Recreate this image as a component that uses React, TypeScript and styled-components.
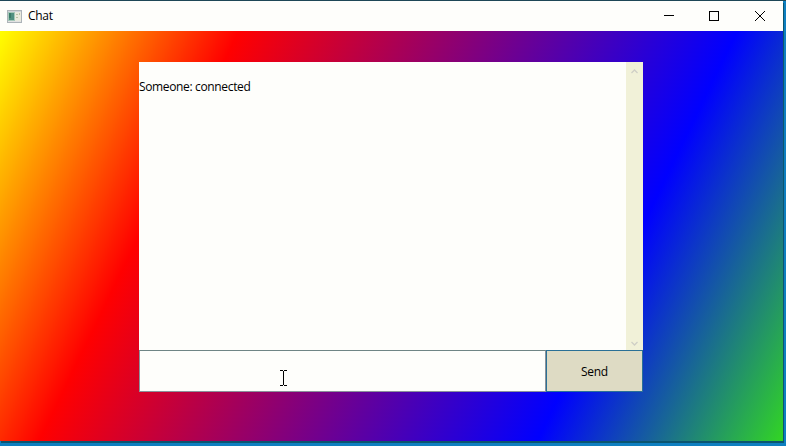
import React from "react";
import styled, { createGlobalStyle } from "styled-components";

const GlobalStyle = createGlobalStyle`
  html, body, #root { margin: 0; height: 100%; overflow: hidden; }
  * { box-sizing: border-box; }
  body { font: 12px/16px "Open Sans", "Noto Sans", sans-serif; color: #000; }
`;

const Desktop = styled.div`
  width: 786px;
  height: 446px;
  padding: 1px 3px 5px 0;
  background: linear-gradient(#1e4756 0 1px, transparent 1px), #0e7fc0;
`;

const Window = styled.main`
  display: flex;
  flex-direction: column;
  height: 440px;
  box-shadow: 1px 2px 0 #0b5570;
`;

const TitleBar = styled.header`
  display: flex;
  flex: 0 0 30px;
  align-items: center;
  padding-left: 7px;
  background: #fefefb;
`;

const Title = styled.span`
  flex: 1;
  padding-left: 6px;
  letter-spacing: -0.3px;
`;

const Caption = styled.button`
  display: grid;
  place-items: center;
  width: 46px;
  height: 28px;
  padding: 0;
  border: 0;
  background: none;

  &:first-of-type { width: 44px; }
`;

const Client = styled.section`
  flex: 1;
  padding: 31px 0 0 139px;
  background: linear-gradient(116deg, #ffff00 0%, #ff0000 24.3%, #0000ff 75%, #32d524 100%);
`;

const Chat = styled.div`
  position: relative;
  display: grid;
  grid-template: 288px 42px / 407px 97px;
  width: 504px;
`;

const History = styled.div`
  display: flex;
  grid-column: 1 / -1;
  background: #fefefb;
`;

const Messages = styled.div`
  flex: 1;
  padding-top: 17px;
  letter-spacing: -0.35px;
`;

const ScrollBar = styled.div`
  display: flex;
  flex-direction: column;
  justify-content: space-between;
  align-items: center;
  width: 17px;
  padding: 7px 0 4px;
  background: #f1f1d8;
`;

const MessageInput = styled.input`
  min-width: 0;
  padding: 0 6px;
  border: 1px solid #8a929a;
  border-top-color: #6f8585;
  background: #fefefb;
  font: inherit;
  outline: none;
`;

const SendButton = styled.button`
  padding: 1px 0 0;
  border: 1px solid #2a7096;
  background: #dedbc4;
  font: inherit;
  letter-spacing: -0.3px;
  color: #000;
`;

const Pointer = styled.svg`
  position: absolute;
  left: 141px;
  top: 308px;
  pointer-events: none;
`;

const AppIcon = () => (
  <svg width="15" height="13" viewBox="0 0 15 13" shapeRendering="crispEdges">
    <path d="M0 0h15v13H0z" fill="#adb4b8" />
    <path d="M1 1h13v1H1z" fill="#cfd3da" />
    <path d="M1 2h7v9H1z" fill="#a5c8b8" />
    <path d="M2 3h5v7H2z" fill="#509080" />
    <path d="M2 3h2v5H2z" fill="#397c68" />
    <path d="M8 2h6v9H8z" fill="#e9eadd" />
    <path d="M9 4h2v1H9zM9 7h2v1H9zM12 3h1v2h-1z" fill="#b9c4a6" />
    <path d="M1 11h13v1H1z" fill="#e2e2e2" />
  </svg>
);

const glyphs = {
  minimize: "M0 4.5h10",
  maximize: "M.5 .5h9v9h-9z",
  close: "M0 0l10 10M10 0L0 10",
};

const Glyph = ({ name }: { name: keyof typeof glyphs }) => (
  <svg
    width="10"
    height="10"
    viewBox="0 0 10 10"
    fill="none"
    stroke="#000"
    overflow="visible"
    shapeRendering={name === "close" ? "auto" : "crispEdges"}
  >
    <path d={glyphs[name]} />
  </svg>
);

const Chevron = ({ up = false }: { up?: boolean }) => (
  <svg width="7" height="5" viewBox="0 0 7 5" fill="none" stroke="#cfcfc6" strokeWidth="1.3">
    <path d={up ? "M.5 4L3.5 1l3 3" : "M.5 1l3 3 3-3"} />
  </svg>
);

export default function App() {
  return (
    <>
      <GlobalStyle />
      <Desktop>
        <Window>
          <TitleBar>
            <AppIcon />
            <Title>Chat</Title>
            <Caption aria-label="Minimize"><Glyph name="minimize" /></Caption>
            <Caption aria-label="Maximize"><Glyph name="maximize" /></Caption>
            <Caption aria-label="Close"><Glyph name="close" /></Caption>
          </TitleBar>
          <Client>
            <Chat>
              <History>
                <Messages>Someone: connected</Messages>
                <ScrollBar>
                  <Chevron up />
                  <Chevron />
                </ScrollBar>
              </History>
              <MessageInput aria-label="Message" />
              <SendButton>Send</SendButton>
              <Pointer width="7" height="16" viewBox="0 0 7 16" shapeRendering="crispEdges">
                <path d="M0 0h3v1H0zM4 0h3v1H4zM3 1h1v14H3zM0 15h3v1H0zM4 15h3v1H4z" />
              </Pointer>
            </Chat>
          </Client>
        </Window>
      </Desktop>
    </>
  );
}
